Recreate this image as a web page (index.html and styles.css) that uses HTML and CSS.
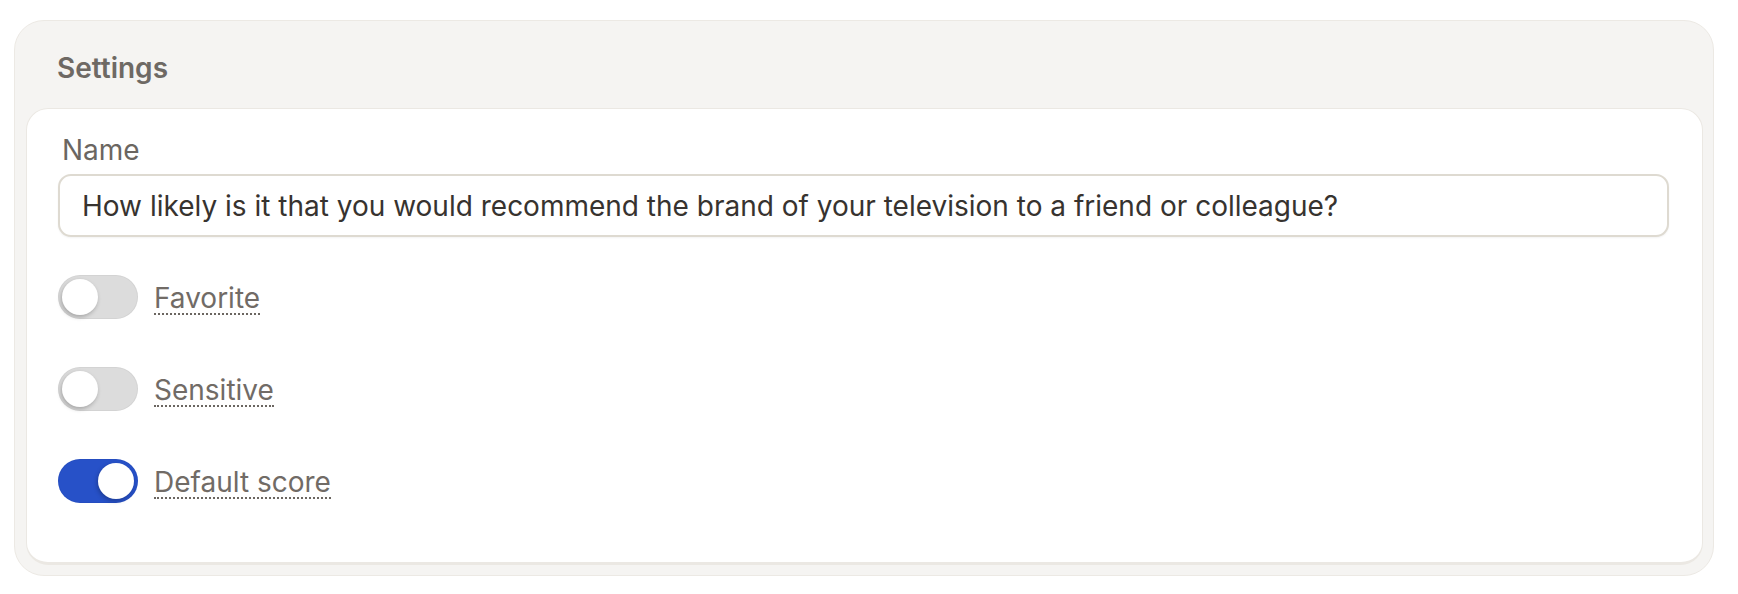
FILE: index.html
```html
<!DOCTYPE html>
<html lang="en">
<head>
<meta charset="utf-8">
<title>Settings</title>
<link rel="stylesheet" href="styles.css">
</head>
<body>
<section class="card">
  <h2 class="card-title">Settings</h2>
  <div class="card-body">
    <label class="field-label" for="name">Name</label>
    <input class="text-input" id="name" type="text" value="How likely is it that you would recommend the brand of your television to a friend or colleague?">
    <div class="toggles">
      <div class="toggle-row">
        <span class="switch"><span class="knob"></span></span>
        <span class="toggle-label">Favorite</span>
      </div>
      <div class="toggle-row">
        <span class="switch"><span class="knob"></span></span>
        <span class="toggle-label">Sensitive</span>
      </div>
      <div class="toggle-row">
        <span class="switch on"><span class="knob"></span></span>
        <span class="toggle-label">Default score</span>
      </div>
    </div>
  </div>
</section>
</body>
</html>
```
FILE: styles.css
```css
* { box-sizing: border-box; }
body {
  margin: 0;
  background: #ffffff;
  font-family: Inter, "Noto Sans", sans-serif;
}
.card {
  margin: 20px 0 0 14px;
  width: 1700px;
  height: 556px;
  background: #f5f4f2;
  border: 1px solid #ece9e4;
  border-radius: 30px;
  padding: 0 10px 10px 11px;
  display: flex;
  flex-direction: column;
}
.card-title {
  margin: 0;
  height: 87px;
  padding: 30px 0 0 31px;
  font-size: 28px;
  font-weight: 600;
  color: #6e6964;
  line-height: 34px;
}
.card-body {
  flex: 1;
  background: #ffffff;
  border: 1px solid #ebe8e3;
  border-bottom-width: 3px;
  border-radius: 22px;
  padding: 24px 33px 0 31px;
  display: flex;
  flex-direction: column;
}
.field-label {
  font-size: 28px;
  line-height: 34px;
  color: #6b6661;
  padding-left: 4px;
  margin-bottom: 7px;
}
.text-input {
  height: 63px;
  width: 100%;
  border: 2px solid #dedad1;
  border-radius: 13px;
  padding: 0 22px;
  font-family: inherit;
  font-size: 28px;
  color: #37332f;
  background: #fff;
  box-shadow: 0 1px 2px rgba(0,0,0,0.05);
  outline: none;
}
.toggles {
  display: flex;
  flex-direction: column;
  gap: 48px;
  margin-top: 38px;
}
.toggle-row {
  display: flex;
  align-items: center;
  gap: 16px;
  height: 44px;
}
.switch {
  width: 80px;
  height: 44px;
  border-radius: 22px;
  background: #dcdcdc;
  box-shadow: inset 0 0 0 1px rgba(0,0,0,0.04);
  padding: 4px;
  display: flex;
  justify-content: flex-start;
  flex-shrink: 0;
}
.switch.on {
  background: #2751c8;
  justify-content: flex-end;
}
.knob {
  width: 36px;
  height: 36px;
  border-radius: 50%;
  background: #ffffff;
  box-shadow: -1px 2px 4px rgba(0,0,0,0.25);
}
.toggle-label {
  font-size: 28px;
  line-height: 30px;
  color: #716b66;
  border-bottom: 2px dotted #6b6661;
  margin-top: 4px;
}
```
